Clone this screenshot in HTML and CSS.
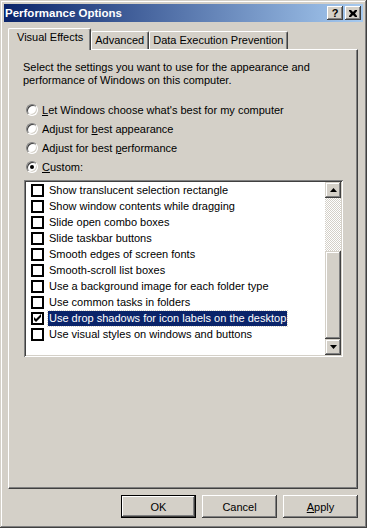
FILE: index.html
```html
<!DOCTYPE html>
<html lang="en">
<head>
    <meta charset="UTF-8">
    <title>Performance Options</title>
    <link rel="stylesheet" href="styles.css">
</head>
<body>
    <div class="window">
        <div class="titlebar">
            <span class="title">Performance Options</span>
            <div class="caption-buttons">
                <span class="cap-btn">?</span>
                <span class="cap-btn">
                    <svg width="8" height="7" viewBox="0 0 8 7"><path d="M0 0h2l2 2 2-2h2v1L6 3.5 8 6v1H6L4 5 2 7H0V6l2-2.5L0 1z" fill="#000"/></svg>
                </span>
            </div>
        </div>

        <div class="tabs">
            <div class="tab active">Visual Effects</div>
            <div class="tab">Advanced</div>
            <div class="tab">Data Execution Prevention</div>
        </div>

        <div class="panel">
            <p class="intro">Select the settings you want to use for the appearance and performance of Windows on this computer.</p>

            <div class="radios">
                <label class="radio"><span class="dot"></span><span><u>L</u>et Windows choose what's best for my computer</span></label>
                <label class="radio"><span class="dot"></span><span>Adjust for <u>b</u>est appearance</span></label>
                <label class="radio"><span class="dot"></span><span>Adjust for best <u>p</u>erformance</span></label>
                <label class="radio"><span class="dot checked"></span><span><u>C</u>ustom:</span></label>
            </div>

            <div class="listbox">
                <ul class="items">
                    <li><span class="box"></span><span class="txt">Show translucent selection rectangle</span></li>
                    <li><span class="box"></span><span class="txt">Show window contents while dragging</span></li>
                    <li><span class="box"></span><span class="txt">Slide open combo boxes</span></li>
                    <li><span class="box"></span><span class="txt">Slide taskbar buttons</span></li>
                    <li><span class="box"></span><span class="txt">Smooth edges of screen fonts</span></li>
                    <li><span class="box"></span><span class="txt">Smooth-scroll list boxes</span></li>
                    <li><span class="box"></span><span class="txt">Use a background image for each folder type</span></li>
                    <li><span class="box"></span><span class="txt">Use common tasks in folders</span></li>
                    <li class="selected"><span class="box"><svg width="9" height="9" viewBox="0 0 9 9"><path d="M1 3l2 2 5-5v3l-5 5-2-2z" fill="#000"/></svg></span><span class="txt">Use drop shadows for icon labels on the desktop</span></li>
                    <li><span class="box"></span><span class="txt">Use visual styles on windows and buttons</span></li>
                </ul>
                <div class="scrollbar">
                    <div class="sb-btn"><svg width="7" height="4" viewBox="0 0 7 4"><path d="M3.5 0L7 4H0z" fill="#000"/></svg></div>
                    <div class="sb-track"></div>
                    <div class="sb-thumb"></div>
                    <div class="sb-btn"><svg width="7" height="4" viewBox="0 0 7 4"><path d="M0 0h7L3.5 4z" fill="#000"/></svg></div>
                </div>
            </div>
        </div>

        <div class="actions">
            <button class="btn default">OK</button>
            <button class="btn">Cancel</button>
            <button class="btn"><u>A</u>pply</button>
        </div>
    </div>
</body>
</html>
```

FILE: styles.css
```css
* {
    margin: 0;
    padding: 0;
    box-sizing: border-box;
}

body {
    background-color: #d4d0c8;
    font-family: 'Liberation Sans', Arial, sans-serif;
    font-size: 11px;
    color: #000;
}

.window {
    width: 367px;
    height: 528px;
    background-color: #d4d0c8;
    padding: 4px;
    box-shadow: inset -1px -1px #404040, inset 1px 1px #d4d0c8, inset -2px -2px #808080, inset 2px 2px #fff;
}

.titlebar {
    height: 18px;
    display: flex;
    align-items: center;
    justify-content: space-between;
    padding: 0 2px 0 1px;
    background: linear-gradient(to right, #0a246a, #a6caf0);
}

.title {
    color: #fff;
    font-weight: bold;
    font-size: 11.5px;
}

.caption-buttons {
    display: flex;
    gap: 2px;
}

.cap-btn {
    width: 16px;
    height: 14px;
    display: flex;
    align-items: center;
    justify-content: center;
    background-color: #d4d0c8;
    font-weight: bold;
    font-size: 11px;
    box-shadow: inset -1px -1px #404040, inset 1px 1px #fff, inset -2px -2px #808080;
}

.tabs {
    display: flex;
    align-items: flex-end;
    height: 21px;
    margin-top: 6px;
    padding-left: 4px;
    position: relative;
    z-index: 1;
}

.tab {
    height: 18px;
    padding: 2px 4px 0 3px;
    border-top: 1px solid #fff;
    border-left: 1px solid #fff;
    border-right: 1px solid #404040;
    box-shadow: inset -1px 0 #808080;
    border-radius: 2px 2px 0 0;
    background-color: #d4d0c8;
}

.tab.active {
    height: 22px;
    padding: 2px 7px 0 8px;
    margin-bottom: -1px;
}

.panel {
    height: 440px;
    margin: 0 5px 0 4px;
    border-top: 1px solid #fff;
    border-left: 1px solid #fff;
    border-right: 1px solid #404040;
    border-bottom: 1px solid #404040;
    box-shadow: inset -1px -1px #808080;
    padding: 11px 13px 0 14px;
}

.intro {
    line-height: 13px;
    width: 300px;
}

.radios {
    margin-top: 16px;
    display: flex;
    flex-direction: column;
    gap: 6px;
}

.radio {
    display: flex;
    align-items: center;
    height: 13px;
    gap: 4px;
    padding-left: 3px;
}

.dot {
    width: 12px;
    height: 12px;
    border-radius: 50%;
    background-color: #fff;
    border: 1px solid;
    border-color: #808080 #fff #fff #808080;
    box-shadow: inset 1px 1px #404040, inset -1px -1px #d4d0c8;
    display: flex;
    align-items: center;
    justify-content: center;
}

.dot.checked::after {
    content: "";
    width: 4px;
    height: 4px;
    border-radius: 50%;
    background-color: #000;
}

.listbox {
    margin-top: 7px;
    margin-left: 1px;
    width: 319px;
    height: 177px;
    display: flex;
    padding: 2px;
    background-color: #fff;
    box-shadow: inset 1px 1px #808080, inset -1px -1px #fff, inset 2px 2px #404040, inset -2px -2px #d4d0c8;
}

.items {
    list-style: none;
    flex: 1;
}

.items li {
    height: 16px;
    display: flex;
    align-items: center;
    padding-left: 5px;
}

.box {
    width: 13px;
    height: 13px;
    border: 2px solid #000;
    background-color: #fff;
    display: flex;
    align-items: center;
    justify-content: center;
    margin-right: 4px;
}

.txt {
    padding: 1px;
    line-height: 13px;
}

.selected .txt {
    background-color: #0a246a;
    color: #fff;
    outline: 1px dotted #d4d0c8;
}

.scrollbar {
    width: 16px;
    display: flex;
    flex-direction: column;
}

.sb-btn {
    height: 16px;
    display: flex;
    align-items: center;
    justify-content: center;
    background-color: #d4d0c8;
    box-shadow: inset -1px -1px #404040, inset 1px 1px #d4d0c8, inset -2px -2px #808080, inset 2px 2px #fff;
}

.sb-track {
    height: 53px;
    background-image: repeating-conic-gradient(#d4d0c8 0 25%, #fff 0 50%);
    background-size: 2px 2px;
}

.sb-thumb {
    flex: 1;
    background-color: #d4d0c8;
    box-shadow: inset -1px -1px #404040, inset 1px 1px #d4d0c8, inset -2px -2px #808080, inset 2px 2px #fff;
}

.actions {
    display: flex;
    justify-content: flex-end;
    gap: 6px;
    margin-top: 6px;
    padding-right: 5px;
}

.btn {
    width: 75px;
    height: 23px;
    font-family: inherit;
    font-size: 11px;
    background-color: #d4d0c8;
    border: none;
    box-shadow: inset -1px -1px #404040, inset 1px 1px #fff, inset -2px -2px #808080;
}

.btn.default {
    border: 1px solid #000;
}
```
